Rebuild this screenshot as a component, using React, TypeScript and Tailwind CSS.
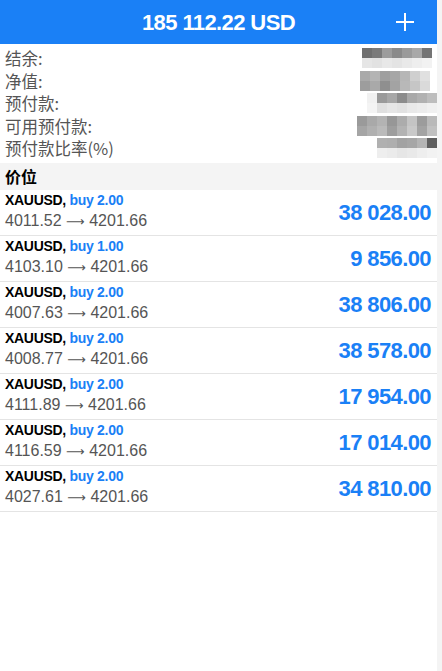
import React from "react";

const sans = "font-['Liberation_Sans','Noto_Sans_CJK_SC',sans-serif]";
const cjk = "font-['Noto_Sans_CJK_SC','Liberation_Sans',sans-serif]";

type Summary = { label: string; cells: string[][]; offset: string };

const summary: Summary[] = [
  {
    label: "结余:",
    offset: "mr-[5px]",
    cells: [
      ["#6f6f6f", "#7a7a7a", "#9c9c9c", "#8a8a8a", "#9a9a9a", "#a8a8a8", "#747474"],
      ["#e6e6e6", "#e2e2e2", "#e8e8e8", "#e4e4e4", "#e9e9e9", "#eeeeee", "#f2f2f2"],
    ],
  },
  {
    label: "净值:",
    offset: "mr-[7px]",
    cells: [
      ["#a9a9a9", "#b4b4b4", "#9f9f9f", "#a6a6a6", "#b6b6b6", "#cfcfcf", "#e0e0e0"],
      ["#9d9d9d", "#a9a9a9", "#8f8f8f", "#a3a3a3", "#b8b8b8", "#c6c6c6", "#dadada"],
    ],
  },
  {
    label: "预付款:",
    offset: "mr-0",
    cells: [
      ["#f1f1f1", "#9a9a9a", "#a7a7a7", "#8c8c8c", "#a9a9a9", "#b1b1b1", "#bdbdbd"],
      ["#f4f4f4", "#e0e0e0", "#e6e6e6", "#e2e2e2", "#e9e9e9", "#ececec", "#f0f0f0"],
    ],
  },
  {
    label: "可用预付款:",
    offset: "mr-0",
    cells: [
      ["#9a9a9a", "#a9a9a9", "#b3b3b3", "#979797", "#acacac", "#c4c4c4", "#9c9c9c", "#b9b9b9"],
      ["#a5a5a5", "#b0b0b0", "#bababa", "#9e9e9e", "#b3b3b3", "#c9c9c9", "#a3a3a3", "#c0c0c0"],
    ],
  },
  {
    label: "预付款比率(%)",
    offset: "mr-0",
    cells: [
      ["#b0b0b0", "#aeaeae", "#a2a2a2", "#a6a6a6", "#b4b4b4", "#5f5f5f"],
      ["#eeeeee", "#ebebeb", "#e6e6e6", "#e9e9e9", "#eeeeee", "#f2f2f2"],
    ],
  },
];

const positions = [
  { side: "buy 2.00", open: "4011.52", profit: "38 028.00" },
  { side: "buy 1.00", open: "4103.10", profit: "9 856.00" },
  { side: "buy 2.00", open: "4007.63", profit: "38 806.00" },
  { side: "buy 2.00", open: "4008.77", profit: "38 578.00" },
  { side: "buy 2.00", open: "4111.89", profit: "17 954.00" },
  { side: "buy 2.00", open: "4116.59", profit: "17 014.00" },
  { side: "buy 2.00", open: "4027.61", profit: "34 810.00" },
];

function Mosaic({ cells, offset }: { cells: string[][]; offset: string }) {
  return (
    <div className={`flex flex-col blur-[0.6px] ${offset}`}>
      {cells.map((row, i) => (
        <div key={i} className="flex">
          {row.map((c, j) => (
            <div key={j} className="h-[10px] w-[10px]" style={{ backgroundColor: c }} />
          ))}
        </div>
      ))}
    </div>
  );
}

export default function App() {
  return (
    <div className={`flex min-h-[671px] w-[442px] bg-white ${sans}`}>
      <div className="flex w-[437px] flex-col">
        <header className="relative flex h-[44px] items-center justify-center bg-[#1a80f6]">
          <div className="text-[22px] font-bold tracking-[-0.6px] text-white">185 112.22 USD</div>
          <svg className="absolute right-[22px] top-[12px]" width="20" height="20" viewBox="0 0 20 20">
            <path d="M10 1v18M1 10h18" stroke="white" strokeWidth="2" fill="none" />
          </svg>
        </header>

        <section className="pb-[3px] pt-[3px]">
          {summary.map((s) => (
            <div key={s.label} className="flex h-[22.5px] items-center justify-between pl-[5px]">
              <span className={`text-[16.5px] leading-none text-[#555] ${cjk}`}>{s.label}</span>
              <Mosaic cells={s.cells} offset={s.offset} />
            </div>
          ))}
        </section>

        <div className={`flex h-[27px] items-center bg-[#f4f4f4] pl-[5px] text-[16px] font-bold text-black ${cjk}`}>
          价位
        </div>

        <ul>
          {positions.map((p, i) => (
            <li key={i} className="flex h-[46px] items-center justify-between border-b border-[#e4e4e4] pl-[5px] pr-[6px]">
              <div className="flex flex-col pb-[1px]">
                <div className="text-[14px] font-bold leading-[20px] tracking-[-0.3px]">
                  <span className="text-black">XAUUSD, </span>
                  <span className="text-[#1a80f6]">{p.side}</span>
                </div>
                <div className="text-[16px] leading-[22px] text-[#555]">
                  {p.open} <span className="font-['DejaVu_Sans',sans-serif] text-[13px]">⟶</span> 4201.66
                </div>
              </div>
              <div className="text-[22px] font-bold tracking-[-0.6px] text-[#1a80f6]">{p.profit}</div>
            </li>
          ))}
        </ul>
      </div>
      <div className="flex-1 bg-[#f4f4f4]" />
    </div>
  );
}
